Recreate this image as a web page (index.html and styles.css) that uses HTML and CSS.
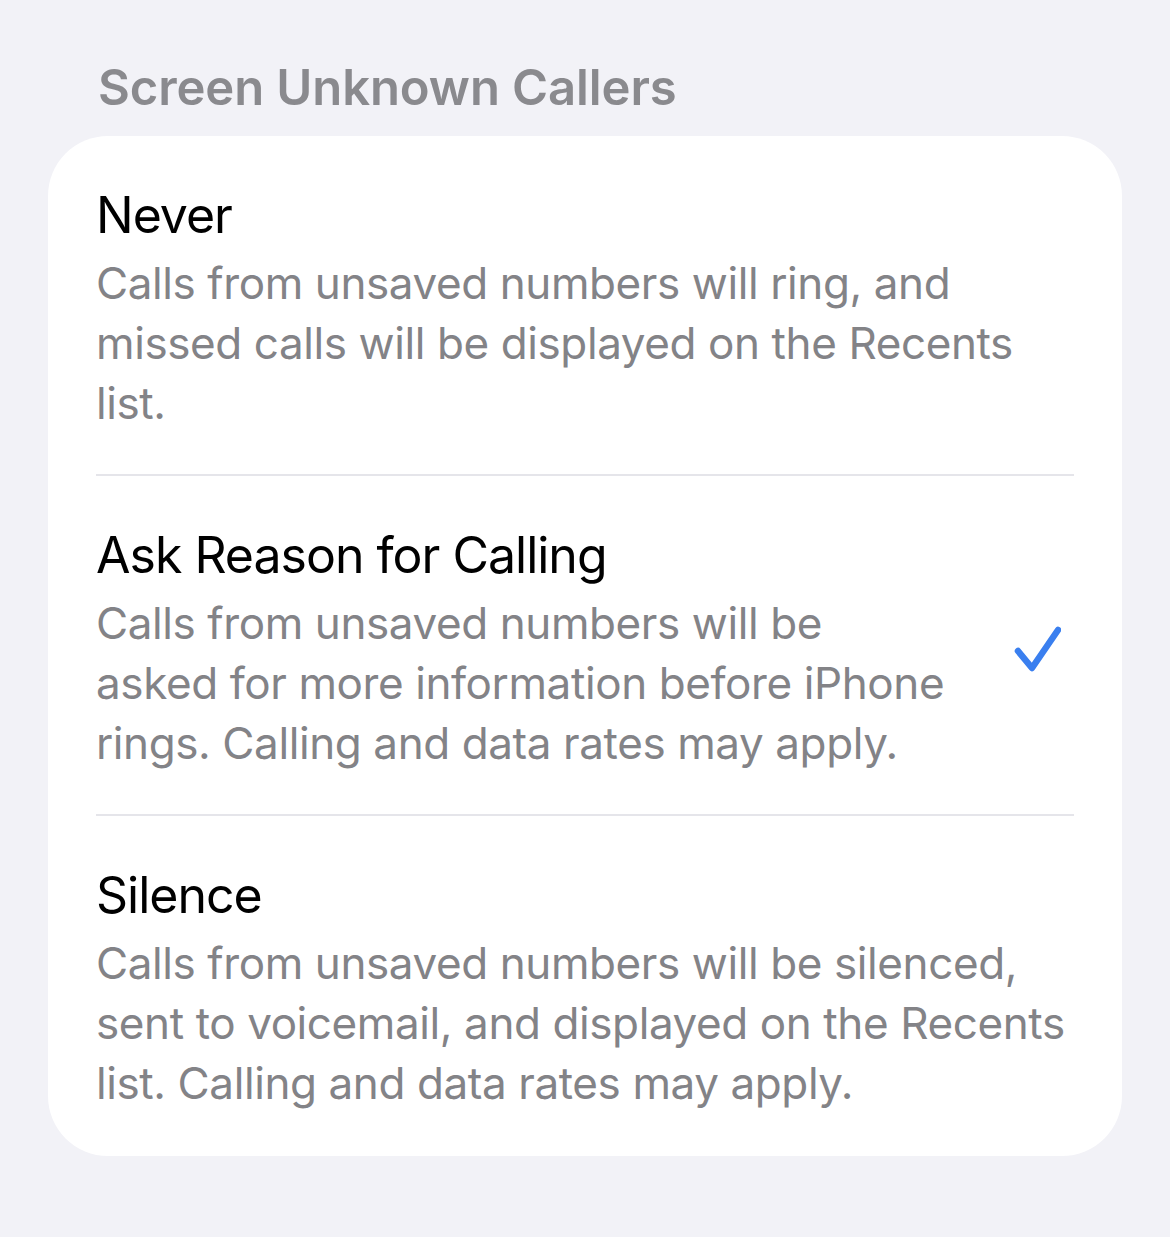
FILE: index.html
```html
<!DOCTYPE html>
<html lang="en">
<head>
<meta charset="utf-8">
<title>Screen Unknown Callers</title>
<link rel="stylesheet" href="styles.css">
</head>
<body>
<h2 class="header">Screen Unknown Callers</h2>
<div class="card">
  <div class="row">
    <div class="text">
      <div class="title">Never</div>
      <div class="desc">Calls from unsaved numbers will ring, and<br>missed calls will be displayed on the Recents<br>list.</div>
    </div>
  </div>
  <div class="row">
    <div class="text">
      <div class="title">Ask Reason for Calling</div>
      <div class="desc">Calls from unsaved numbers will be<br>asked for more information before iPhone<br>rings. Calling and data rates may apply.</div>
    </div>
    <svg class="check" viewBox="0 0 48 48" width="48" height="48" aria-hidden="true">
      <path d="M5 26 L19 43 L45 5" fill="none" stroke="#3A7FEF" stroke-width="6.5" stroke-linecap="round" stroke-linejoin="round"/>
    </svg>
  </div>
  <div class="row last">
    <div class="text">
      <div class="title">Silence</div>
      <div class="desc">Calls from unsaved numbers will be silenced,<br>sent to voicemail, and displayed on the Recents<br>list. Calling and data rates may apply.</div>
    </div>
  </div>
</div>
</body>
</html>
```
FILE: styles.css
```css
html, body {
  margin: 0;
  padding: 0;
  background: #f2f2f7;
}
body {
  width: 1170px;
  height: 1237px;
  font-family: Inter, "Noto Sans", sans-serif;
  overflow: hidden;
}
.header {
  margin: 0;
  padding: 58px 0 0 98px;
  font-size: 49px;
  line-height: 60px;
  font-weight: 600;
  color: #8a8a8e;
  letter-spacing: -0.1px;
}
.card {
  margin: 18px 48px 0;
  background: #ffffff;
  border-radius: 60px;
  padding: 0 48px;
}
.row {
  display: flex;
  align-items: center;
  padding: 49px 0 41px;
  border-bottom: 2px solid #e5e5ea;
}
.row.last {
  border-bottom: none;
  padding-bottom: 43px;
}
.text {
  flex: 1;
  min-width: 0;
}
.title {
  font-size: 50px;
  line-height: 60px;
  color: #000000;
  white-space: nowrap;
  letter-spacing: -1px;
}
.desc {
  margin-top: 8px;
  font-size: 44px;
  line-height: 60px;
  color: #838387;
  white-space: nowrap;
  letter-spacing: -0.4px;
}
.check {
  flex: none;
  margin-right: 13px;
}
```
